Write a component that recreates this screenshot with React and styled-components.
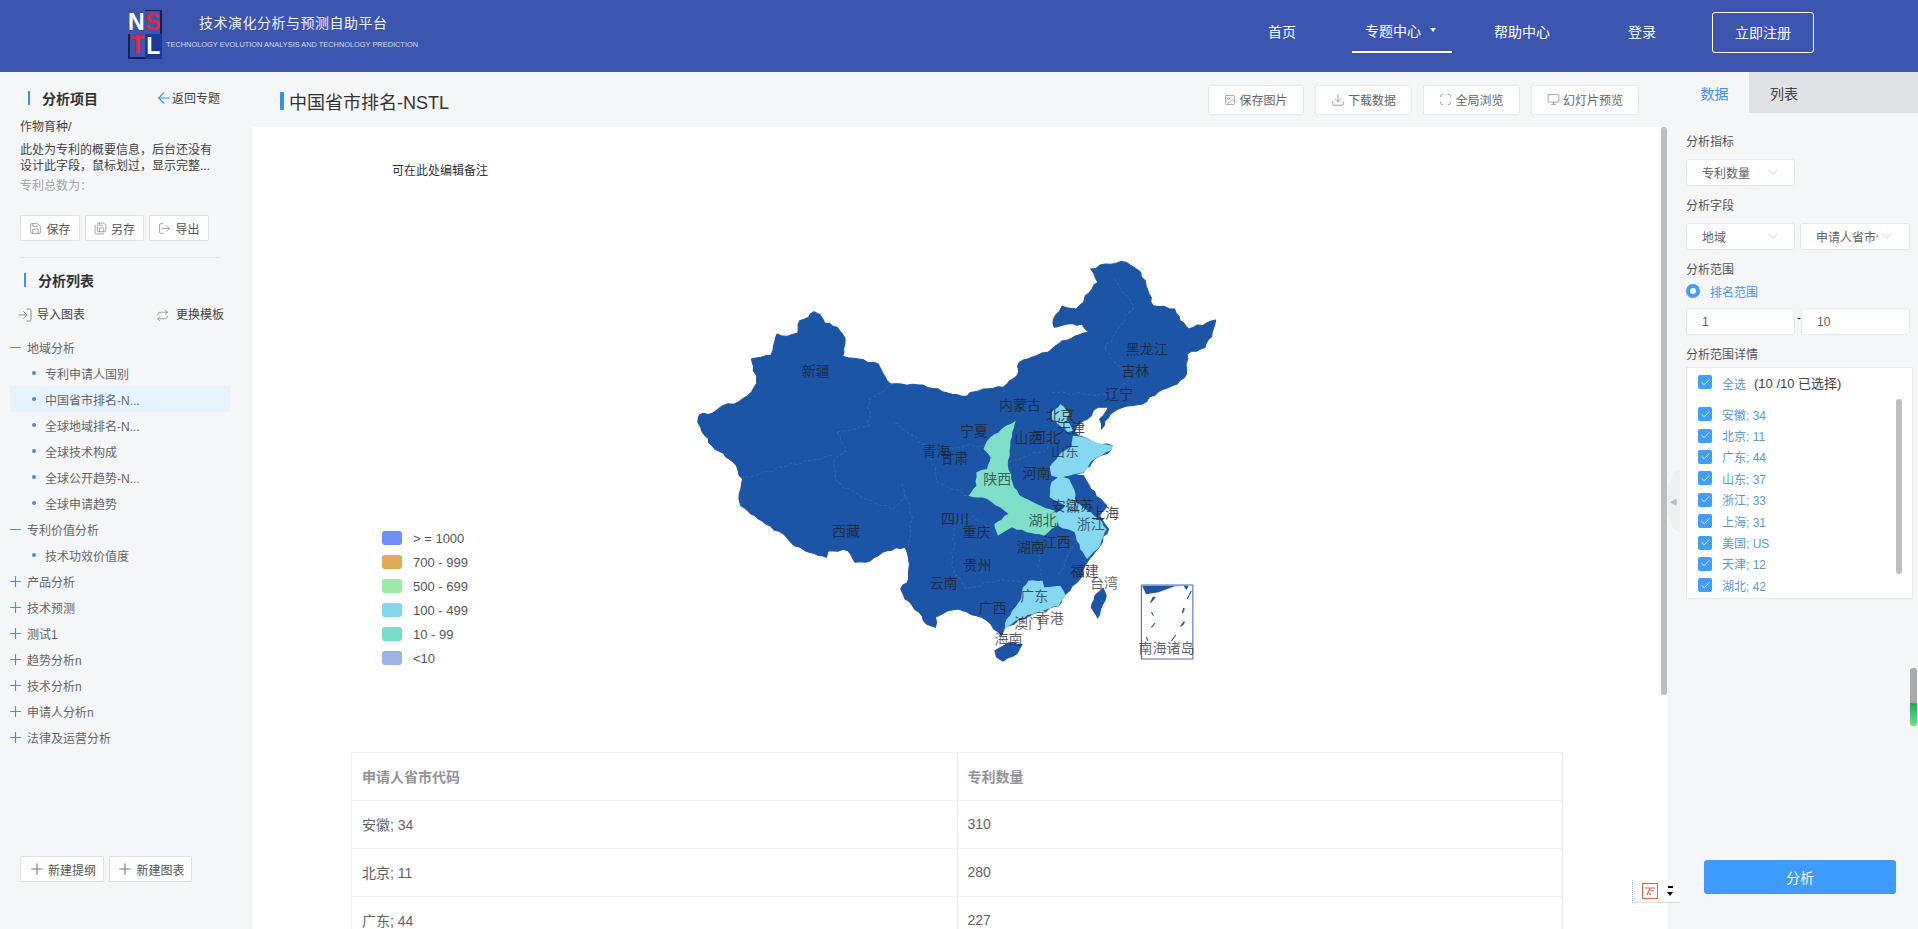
import React from "react";
import styled, { createGlobalStyle } from "styled-components";
import {
  ArrowLeft,
  Check,
  ChevronDown,
  Download,
  Image as ImageIcon,
  LogIn,
  LogOut,
  Minus,
  Monitor,
  Plus,
  Repeat,
  Save,
  SaveAll,
  Scan,
} from "lucide-react";

const GlobalStyle = createGlobalStyle`
  html, body {
    margin: 0;
    padding: 0;
    background: #f5f6f8;
    overflow: hidden;
  }
  * {
    box-sizing: border-box;
  }
  body {
    font-family: "Liberation Sans", "Noto Sans CJK SC", sans-serif;
    font-size: 12px;
    color: #333;
  }
`;

const Page = styled.div`
  position: relative;
  width: 1918px;
  height: 929px;
  display: flex;
  flex-direction: column;
  overflow: hidden;
`;

const Header = styled.header`
  height: 72px;
  flex: none;
  background: #3c56af;
  display: flex;
  align-items: center;
  padding: 0 104px 0 128px;
  color: #fff;
`;

const Logo = styled.div`
  width: 34px;
  height: 44px;
  margin-top: -8px;
  display: grid;
  grid-template-columns: 1fr 1fr;
  grid-template-rows: 1fr 1fr;
  flex: none;
`;

const LogoCell = styled.span`
  display: flex;
  align-items: center;
  justify-content: center;
  font-weight: 700;
  font-size: 23px;
  line-height: 1;
  color: ${(p) => p.$color};
  background: ${(p) => p.$bg || "transparent"};
  border-style: solid;
  border-color: #14214f;
  border-width: ${(p) => p.$edge || "0"};
`;

const Brand = styled.div`
  margin-left: 4px;
  margin-top: -10px;
  display: flex;
  flex-direction: column;
`;

const BrandTitle = styled.div`
  margin-left: 33px;
  font-size: 14px;
  letter-spacing: 0.5px;
  line-height: 20px;
  color: #eef1fa;
`;

const BrandSub = styled.div`
  margin-top: 7px;
  font-size: 7.4px;
  line-height: 10px;
  white-space: nowrap;
  color: #d5dcf2;
`;

const Nav = styled.nav`
  margin-left: auto;
  display: flex;
  align-items: center;
  height: 72px;
`;

const NavItem = styled.a`
  width: ${(p) => p.$w}px;
  height: 41px;
  margin-top: -7px;
  padding: 0 ${(p) => (p.$active ? 3 : 0)}px 3px 0;
  display: flex;
  align-items: center;
  justify-content: center;
  gap: 9px;
  font-size: 14px;
  color: #fff;
  border-bottom: ${(p) => (p.$active ? "2px solid #fff" : "none")};
`;

const Caret = styled.i`
  width: 0;
  height: 0;
  border-left: 3.5px solid transparent;
  border-right: 3.5px solid transparent;
  border-top: 4px solid #fff;
`;

const RegisterButton = styled.button`
  width: 102px;
  height: 41px;
  margin-top: -7px;
  margin-left: 20px;
  padding: 0 0 2px;
  background: transparent;
  border: 1px solid #fff;
  border-radius: 3px;
  color: #fff;
  font: inherit;
  font-size: 14px;
`;

const Body = styled.div`
  flex: 1;
  min-height: 0;
  display: grid;
  grid-template-columns: 253px 1414px 251px;
`;

const LeftPanel = styled.aside`
  display: flex;
  flex-direction: column;
  padding: 18px 0 47px 20px;
  min-height: 0;
`;

const SectionHead = styled.div`
  display: flex;
  align-items: center;
  height: ${(p) => p.$h || 16}px;
  margin-left: ${(p) => p.$indent || 8}px;
  margin-top: ${(p) => p.$top || 0}px;
  font-size: 14px;
  font-weight: 700;
  color: #333;
  &::before {
    content: "";
    width: 2px;
    height: 14px;
    margin-right: 12px;
    background: #3e8fe8;
  }
`;

const BackLink = styled.a`
  margin-left: auto;
  margin-right: 33px;
  display: flex;
  align-items: center;
  font-size: 12px;
  font-weight: 400;
  color: #444;
  svg {
    color: #3e8fe8;
    margin-right: -1px;
  }
`;

const Crumb = styled.div`
  margin-top: 14px;
  line-height: 16px;
  color: #444;
`;

const Summary = styled.div`
  margin-top: 7px;
  width: 196px;
  line-height: 16px;
  color: #444;
`;

const Total = styled.div`
  margin-top: 4px;
  line-height: 16px;
  color: #a3a5a9;
`;

const ButtonRow = styled.div`
  margin-top: ${(p) => p.$top}px;
  display: flex;
  gap: 5px;
`;

const GhostButton = styled.button`
  width: ${(p) => p.$w}px;
  height: 26px;
  padding: 0;
  display: flex;
  align-items: center;
  justify-content: center;
  gap: ${(p) => p.$gap || 4}px;
  background: #fff;
  border: 1px solid #dfe1e6;
  border-radius: 1px;
  font: inherit;
  font-size: 12px;
  color: #555;
  svg {
    color: #777;
  }
`;

const Divider = styled.div`
  width: 200px;
  height: 1px;
  margin-top: 16px;
  background: #e7e8ec;
`;

const ListActions = styled.div`
  display: flex;
  justify-content: space-between;
  width: 207px;
  margin: 19px 0 0 -3px;
`;

const ListAction = styled.a`
  display: flex;
  align-items: center;
  gap: ${(p) => p.$gap}px;
  line-height: 16px;
  color: #444;
  svg {
    color: #777;
  }
`;

const Tree = styled.ul`
  list-style: none;
  margin: 11px 0 0 -10px;
  padding: 0;
  width: 220px;
`;

const TreeRow = styled.li`
  height: 26px;
  display: flex;
  align-items: center;
  padding-left: ${(p) => (p.$child ? 22 : 0)}px;
  color: #666;
  background: ${(p) => (p.$active ? "#e6f2fd" : "transparent")};
  svg {
    color: #4a8ed8;
    margin: 0 3px 0 -3px;
    flex: none;
  }
`;

const Bullet = styled.i`
  width: 4px;
  height: 4px;
  margin-right: 9px;
  border-radius: 50%;
  background: #4a8ed8;
`;

const BottomRow = styled(ButtonRow)`
  margin-top: auto;
`;

const Center = styled.main`
  position: relative;
  display: flex;
  flex-direction: column;
  min-height: 0;
`;

const Toolbar = styled.div`
  height: 55px;
  flex: none;
  display: flex;
  align-items: center;
  padding: 0 28px 0 27px;
`;

const PageTitle = styled.h1`
  margin: 2px 0 0;
  display: flex;
  align-items: center;
  font-size: 18px;
  font-weight: 400;
  color: #333;
  &::before {
    content: "";
    width: 4px;
    height: 18px;
    margin-right: 5px;
    background: #3e8fe8;
  }
`;

const ToolActions = styled.div`
  margin-left: auto;
  display: flex;
  gap: 11px;
`;

const ToolButton = styled.button`
  width: ${(p) => p.$w}px;
  height: 30px;
  padding: 0;
  display: flex;
  align-items: center;
  justify-content: center;
  gap: 3px;
  background: #fff;
  border: 1px solid #e8e9ed;
  border-radius: 2px;
  font: inherit;
  font-size: 12px;
  color: #666;
  svg {
    color: #777;
  }
`;

const Sheet = styled.div`
  flex: 1;
  min-height: 0;
  background: #fff;
  overflow: hidden;
`;

const ThumbMain = styled.div`
  position: absolute;
  right: 0;
  top: 55px;
  width: 6px;
  height: 568px;
  border-radius: 3px;
  background: #bdbdbd;
`;

const Note = styled.div`
  margin: 36px 0 0 139px;
  line-height: 16px;
  color: #333;
`;

const ChartArea = styled.div`
  position: relative;
  padding: 70px 0 73px 427px;
`;

const Legend = styled.ul`
  position: absolute;
  left: 129px;
  top: 347px;
  list-style: none;
  margin: 0;
  padding: 0;
`;

const LegendItem = styled.li`
  height: 24px;
  display: flex;
  align-items: center;
  font-size: 13px;
  color: #555;
  &::before {
    content: "";
    width: 20px;
    height: 14px;
    margin-right: 11px;
    border-radius: 3px;
    background: ${(p) => p.$color};
  }
`;

const MapSvg = styled.svg`
  display: block;
  width: 560px;
  height: 430px;
`;

const MapLabel = styled.text`
  font-size: 14px;
  fill: #1f2530;
  fill-opacity: ${(p) => (p.$soft ? 0.72 : 0.85)};
  text-anchor: middle;
  dominant-baseline: central;
`;

const DataTable = styled.table`
  width: 1212px;
  margin-left: 98px;
  border-collapse: collapse;
  table-layout: fixed;
  font-size: 14px;
  color: #606266;
  th,
  td {
    height: 48px;
    padding: 0 10px 1px;
    text-align: left;
    border: 1px solid #ebeef5;
  }
  th {
    font-weight: 700;
    color: #909399;
  }
`;

const RightPanel = styled.aside`
  position: relative;
  display: flex;
  flex-direction: column;
  min-height: 0;
`;

const Tabs = styled.div`
  height: 41px;
  flex: none;
  display: flex;
  margin-left: 13px;
  background: #e0e1e4;
`;

const Tab = styled.div`
  width: ${(p) => (p.$active ? 69 : 70)}px;
  display: flex;
  align-items: center;
  justify-content: center;
  font-size: 14px;
  color: ${(p) => (p.$active ? "#3e8fe8" : "#444")};
  background: ${(p) => (p.$active ? "#f5f6f8" : "transparent")};
`;

const Form = styled.div`
  padding: 21px 5px 0 19px;
`;

const FieldLabel = styled.div`
  height: 16px;
  line-height: 16px;
  color: #555;
  margin-top: ${(p) => p.$top || 0}px;
`;

const FieldRow = styled.div`
  display: flex;
  align-items: center;
  margin-top: ${(p) => p.$top || 9}px;
  gap: 5px;
`;

const SelectBox = styled.div`
  position: relative;
  width: ${(p) => p.$w || 109}px;
  height: 27px;
  padding-left: 15px;
  display: flex;
  align-items: center;
  overflow: hidden;
  white-space: nowrap;
  background: #fff;
  border: 1px solid #e4e7ed;
  border-radius: 3px;
  color: #606266;
  span {
    display: block;
    width: ${(p) => (p.$clip ? 62 : 70)}px;
    overflow: hidden;
  }
  svg {
    position: absolute;
    right: ${(p) => (p.$clip ? 13 : 12)}px;
    top: 3px;
    color: #c0c4cc;
  }
`;

const RadioRow = styled.div`
  height: 16px;
  margin-top: 5px;
  display: flex;
  align-items: center;
  gap: 10px;
  color: #4a97ef;
`;

const Radio = styled.i`
  width: 14px;
  height: 14px;
  border-radius: 50%;
  border: 4px solid #409eff;
  background: #fff;
`;

const NumberBox = styled.div`
  width: 109px;
  height: 27px;
  padding-left: 15px;
  display: flex;
  align-items: center;
  background: #fff;
  border: 1px solid #e4e7ed;
  border-radius: 3px;
  color: #606266;
`;

const RangeDash = styled.span`
  width: 1px;
  margin: -8px -2px 0 -3px;
  line-height: 10px;
`;

const DetailBox = styled.div`
  position: relative;
  width: 227px;
  height: 232px;
  margin-top: 4px;
  padding: 7px 0 0 11px;
  background: #fff;
  border: 1px solid #e4e7ed;
  overflow: hidden;
`;

const CheckRow = styled.div`
  height: ${(p) => (p.$head ? 28.5 : 21.4)}px;
  display: flex;
  align-items: ${(p) => (p.$head ? "flex-start" : "center")};
  gap: 10px;
  color: #5c97dc;
`;

const Tick = styled.span`
  width: 14px;
  height: 14px;
  flex: none;
  display: flex;
  align-items: center;
  justify-content: center;
  border-radius: 2px;
  background: #409eff;
  color: #fff;
`;

const Counter = styled.span`
  font-size: 13px;
  color: #444;
  margin: -2px 0 0 -2px;
`;

const ThumbList = styled.div`
  position: absolute;
  right: 10px;
  top: 31px;
  width: 6px;
  height: 175px;
  border-radius: 3px;
  background: #bdbdbd;
`;

const CollapseHandle = styled.div`
  position: absolute;
  left: 0;
  top: 398px;
  width: 13px;
  height: 62px;
  display: flex;
  align-items: center;
  justify-content: center;
  background: #eeeff2;
  clip-path: ellipse(100% 50% at 100% 50%);
  font-size: 8px;
  color: #bbb;
`;

const AnalyzeButton = styled.button`
  position: absolute;
  left: 37px;
  bottom: 35px;
  width: 192px;
  height: 34px;
  background: #3e9bff;
  border: none;
  border-radius: 3px;
  color: #fff;
  font: inherit;
  font-size: 14px;
`;

const SideGauge = styled.div`
  position: absolute;
  right: 1px;
  top: 596px;
  width: 7px;
  height: 58px;
  border-radius: 3px;
  overflow: hidden;
  background: linear-gradient(#a9a9a9 0, #a9a9a9 60%, #1fa65a 60%, #6fe08c 100%);
`;

const FloatWidget = styled.div`
  position: absolute;
  left: 1632px;
  top: 880px;
  width: 48px;
  height: 23px;
  display: flex;
  align-items: center;
  padding-left: 2px;
  background: #fff;
  border-bottom: 1px solid #dedede;
  border-left: 1px dotted #9dbad0;
`;

const ImeBadge = styled.div`
  width: 16px;
  height: 16px;
  margin-left: 7px;
  border: 1px solid #d9694a;
  display: flex;
  align-items: center;
  justify-content: center;
`;

const ImeArrows = styled.div`
  margin-left: 9px;
  display: flex;
  flex-direction: column;
  align-items: center;
  gap: 4px;
  &::before {
    content: "";
    width: 5px;
    height: 2px;
    background: #000;
  }
  &::after {
    content: "";
    border-left: 3px solid transparent;
    border-right: 3px solid transparent;
    border-top: 4px solid #000;
  }
`;

const TREE = [
  { label: "地域分析", open: true },
  { label: "专利申请人国别", child: true },
  { label: "中国省市排名-N...", child: true, active: true },
  { label: "全球地域排名-N...", child: true },
  { label: "全球技术构成", child: true },
  { label: "全球公开趋势-N...", child: true },
  { label: "全球申请趋势", child: true },
  { label: "专利价值分析", open: true },
  { label: "技术功效价值度", child: true },
  { label: "产品分析" },
  { label: "技术预测" },
  { label: "测试1" },
  { label: "趋势分析n" },
  { label: "技术分析n" },
  { label: "申请人分析n" },
  { label: "法律及运营分析" },
];

const LEGEND = [
  ["> = 1000", "#6f8efc"],
  ["700 - 999", "#e0a957"],
  ["500 - 699", "#9ceaa6"],
  ["100 - 499", "#80d6ee"],
  ["10 - 99", "#74e0ca"],
  ["<10", "#9fb2e8"],
];

const REGIONS = ["安徽; 34", "北京; 11", "广东; 44", "山东; 37", "浙江; 33", "上海; 31", "美国; US", "天津; 12", "湖北; 42"];

// map shapes are traced at 2.8x / 3x of the 560x430 canvas
const CHINA =
  "M50 520 55 497 90 493 120 470 165 458 190 440 215 403 215 380 205 365 200 330 240 320 255 318 262 290 272 255 300 262 330 252 335 215 360 205 375 188 392 197 405 222 440 235 462 268 458 300 455 322 500 330 555 345 575 385 590 405 620 405 680 408 735 428 790 442 850 420 905 415 945 378 950 340 985 325 1030 310 1060 285 1105 262 1145 250 1125 225 1085 225 1048 235 1045 212 1070 172 1110 180 1130 160 1135 140 1170 100 1150 60 1190 45 1250 40 1290 70 1305 110 1325 170 1385 180 1400 215 1425 240 1500 213 1490 250 1470 295 1420 315 1418 375 1392 405 1340 428 1295 465 1240 475 1205 495 1180 540 1175 510 1200 475 1170 475 1140 510 1110 530 1105 550 1130 565 1165 585 1210 590 1205 605 1160 630 1130 670 1090 675 1130 680 1150 720 1195 770 1175 800 1200 840 1170 900 1140 940 1120 990 1080 1035 1060 1070 1000 1090 960 1110 910 1135 900 1160 860 1115 830 1100 780 1080 750 1085 715 1105 715 1135 690 1125 670 1090 630 1050 618 1020 640 990 640 930 630 895 580 905 520 940 490 940 470 905 415 905 410 925 350 905 320 890 290 855 240 825 210 800 170 770 165 750 175 690 150 640 90 590 70 560Z";
const HAINAN = "M880 1205 920 1180 960 1185 945 1215 905 1238 885 1225Z";
const TAIWAN = "M1185 1015 1195 1040 1170 1110 1150 1075 1160 1040Z";
const MINT =
  "M940 515 900 540 860 575 850 600 870 625 860 660 830 670 830 710 808 740 860 750 920 795 880 825 890 860 930 835 970 850 1020 860 1055 830 1060 800 1050 785 1010 770 960 745 935 715 918 650 925 590 930 550Z";
const SKY = [
  "M1040 700 1060 685 1090 690 1105 725 1110 760 1150 790 1175 810 1195 840 1170 900 1140 930 1120 900 1105 850 1060 830 1055 790 1080 770 1035 745Z",
  "M1035 655 1060 620 1095 590 1100 560 1130 565 1165 580 1212 590 1205 605 1160 630 1130 670 1090 680 1065 690 1040 680Z",
  "M1065 465 1090 490 1085 510 1100 545 1085 550 1040 510 1040 490Z",
  "M975 995 1015 995 1020 1015 1065 1010 1080 1040 1060 1070 1000 1090 950 1110 915 1135 903 1160 915 1110 930 1085 955 1050 960 1015Z",
];
const BORDERS = [
  "M440 550 530 530 530 450 600 405",
  "M440 550 465 600 430 640 440 700 520 750 590 780 640 740",
  "M170 690 300 650 430 620",
  "M640 895 650 800 620 700",
  "M600 520 700 600 720 700 810 740",
  "M760 600 800 590 850 590",
  "M1190 300 1225 350 1260 390 1210 440 1040 430",
  "M1215 90 1270 170 1190 300",
  "M920 640 1030 600 1060 520",
  "M880 850 820 800 770 830 760 950 800 1020 900 990 960 1000",
  "M1000 860 1010 980",
  "M1100 890 1060 980",
];
const INSET_DASHES = [
  "M1325 1045 1318 1060 1330 1045Z",
  "M1410 1078 1407 1092 1412 1080Z",
  "M1412 1118 1402 1132 1410 1125Z",
  "M1330 1122 1320 1135",
  "M1320 1090 1326 1100",
  "M1388 1158 1376 1176",
  "M1306 1164 1310 1176",
  "M1432 1025 1420 1050",
];
const LABELS = [
  ["新疆", 380, 367], ["西藏", 465, 845], ["青海", 718, 607], ["甘肃", 768, 627], ["宁夏", 823, 547],
  ["内蒙古", 952, 468], ["黑龙江", 1307, 300], ["吉林", 1275, 365], ["辽宁", 1230, 435], ["北京", 1065, 497],
  ["天津", 1095, 537], ["山西", 975, 567], ["河北", 1025, 563], ["山东", 1078, 607, 1], ["陕西", 888, 690, 1],
  ["河南", 998, 672], ["江苏", 1120, 767], ["安徽", 1080, 772, 1], ["上海", 1190, 793], ["四川", 770, 810],
  ["重庆", 830, 850], ["湖北", 1015, 813, 1], ["浙江", 1150, 825, 1], ["湖南", 982, 893], ["江西", 1055, 880],
  ["贵州", 833, 948], ["云南", 738, 1002], ["福建", 1133, 967], ["台湾", 1187, 1003, 1], ["广东", 992, 1042, 1],
  ["广西", 875, 1077], ["香港", 1035, 1107, 1], ["澳门", 975, 1122, 1], ["海南", 920, 1170, 1], ["南海诸岛", 1362, 1198, 1],
];

// breaks the straight traced edges into a small, repeatable wobble
const rough = (d, amp = 4) => {
  const nums = d.match(/[\d.]+/g).map(Number);
  const closed = d.endsWith("Z");
  const pts = [];
  for (let i = 0; i < nums.length; i += 2) pts.push([nums[i], nums[i + 1]]);
  if (closed) pts.push(pts[0]);
  const out = [pts[0]];
  for (let i = 1; i < pts.length; i++) {
    const [ax, ay] = pts[i - 1];
    const [bx, by] = pts[i];
    const len = Math.hypot(bx - ax, by - ay);
    const n = Math.max(1, Math.round(len / 14));
    for (let k = 1; k <= n; k++) {
      const t = k / n;
      const wobble = k === n ? 0 : amp * Math.sin(k * 2.7 + i * 1.3) * Math.cos(k * 1.1 + i);
      out.push([ax + (bx - ax) * t + (wobble * (by - ay)) / len, ay + (by - ay) * t - (wobble * (bx - ax)) / len]);
    }
  }
  return "M" + out.map(([x, y]) => `${x.toFixed(1)} ${y.toFixed(1)}`).join(" ") + (closed ? "Z" : "");
};

function ChinaMap() {
  return (
    <MapSvg viewBox="0 0 560 430">
      <g transform="scale(0.35714 0.33333)" strokeLinejoin="round">
        <path d={rough(CHINA)} fill="#1c54a6" stroke="#1c54a6" strokeWidth="3" />
        <path d={rough(HAINAN, 2)} fill="#1c54a6" />
        <path d={rough(TAIWAN, 2)} fill="#1c54a6" />
        <path d={rough(MINT, 3)} fill="#7ee0c8" />
        {SKY.map((d) => (
          <path key={d} d={rough(d, 3)} fill="#86d7f0" />
        ))}
        {BORDERS.map((d) => (
          <path key={d} d={rough(d, 6)} fill="none" stroke="#6d9bd3" strokeOpacity="0.55" strokeWidth="1.5" strokeDasharray="10 5" />
        ))}
        <path d="M1292 1008H1436V1230H1292Z" fill="#fff" stroke="#4e6fae" strokeWidth="3" />
        <path d="M1294 1010 1420 1010 1385 1012 1340 1030 1305 1036Z" fill="#1c54a6" />
        <path d="M1410 1010 1424 1010 1418 1024Z" fill="#1c54a6" />
        {INSET_DASHES.map((d) => (
          <path key={d} d={d} fill="#1c54a6" stroke="#1c54a6" strokeWidth="3" />
        ))}
      </g>
      {LABELS.map(([name, x, y, soft]) => (
        <MapLabel key={name} x={x / 2.8} y={y / 3} $soft={soft}>
          {name}
        </MapLabel>
      ))}
    </MapSvg>
  );
}

export default function App() {
  return (
    <Page>
      <GlobalStyle />
      <Header>
        <Logo>
          <LogoCell $color="#fff">N</LogoCell>
          <LogoCell $color="#e3263c" $edge="1px 2px 0 0">S</LogoCell>
          <LogoCell $color="#e3263c" $edge="0 0 2px 2px">T</LogoCell>
          <LogoCell $color="#fff" $bg="#173a9c">L</LogoCell>
        </Logo>
        <Brand>
          <BrandTitle>技术演化分析与预测自助平台</BrandTitle>
          <BrandSub>TECHNOLOGY EVOLUTION ANALYSIS AND TECHNOLOGY PREDICTION</BrandSub>
        </Brand>
        <Nav>
          <NavItem $w={140}>首页</NavItem>
          <NavItem $w={100} $active>
            专题中心 <Caret />
          </NavItem>
          <NavItem $w={140}>帮助中心</NavItem>
          <NavItem $w={100}>登录</NavItem>
          <RegisterButton>立即注册</RegisterButton>
        </Nav>
      </Header>
      <Body>
        <LeftPanel>
          <SectionHead $h={15}>
            分析项目
            <BackLink>
              <ArrowLeft size={18} strokeWidth={1.5} />
              返回专题
            </BackLink>
          </SectionHead>
          <Crumb>作物育种/</Crumb>
          <Summary>
            此处为专利的概要信息，后台还没有
            <br />
            设计此字段，鼠标划过，显示完整...
          </Summary>
          <Total>专利总数为：</Total>
          <ButtonRow $top={21}>
            <GhostButton $w={60}><Save size={13} strokeWidth={1.2} />保存</GhostButton>
            <GhostButton $w={59}><SaveAll size={13} strokeWidth={1.2} />另存</GhostButton>
            <GhostButton $w={60}><LogOut size={13} strokeWidth={1.2} />导出</GhostButton>
          </ButtonRow>
          <Divider />
          <SectionHead $indent={4} $top={14}>
            分析列表
          </SectionHead>
          <ListActions>
            <ListAction $gap={4}><LogIn size={16} strokeWidth={1.2} />导入图表</ListAction>
            <ListAction $gap={7}><Repeat size={13} strokeWidth={1.2} />更换模板</ListAction>
          </ListActions>
          <Tree>
            {TREE.map((row) => (
              <TreeRow key={row.label} $child={row.child} $active={row.active}>
                {row.child ? (
                  <Bullet />
                ) : row.open ? (
                  <Minus size={17} strokeWidth={1.6} />
                ) : (
                  <Plus size={17} strokeWidth={1.6} />
                )}
                {row.label}
              </TreeRow>
            ))}
          </Tree>
          <BottomRow>
            <GhostButton $w={84} $gap={2}><Plus size={18} strokeWidth={1.5} />新建提纲</GhostButton>
            <GhostButton $w={83} $gap={2}><Plus size={18} strokeWidth={1.5} />新建图表</GhostButton>
          </BottomRow>
        </LeftPanel>

        <Center>
          <Toolbar>
            <PageTitle>中国省市排名-NSTL</PageTitle>
            <ToolActions>
              <ToolButton $w={96}><ImageIcon size={12} strokeWidth={1.2} />保存图片</ToolButton>
              <ToolButton $w={97}><Download size={14} strokeWidth={1.2} />下载数据</ToolButton>
              <ToolButton $w={97}><Scan size={13} strokeWidth={1.2} />全局浏览</ToolButton>
              <ToolButton $w={108}><Monitor size={13} strokeWidth={1.2} />幻灯片预览</ToolButton>
            </ToolActions>
          </Toolbar>
          <Sheet>
            <Note>可在此处编辑备注</Note>
            <ChartArea>
              <Legend>
                {LEGEND.map(([label, color]) => (
                  <LegendItem key={label} $color={color}>{label}</LegendItem>
                ))}
              </Legend>
              <ChinaMap />
            </ChartArea>
            <DataTable>
              <thead>
                <tr><th>申请人省市代码</th><th>专利数量</th></tr>
              </thead>
              <tbody>
                <tr><td>安徽; 34</td><td>310</td></tr>
                <tr><td>北京; 11</td><td>280</td></tr>
                <tr><td>广东; 44</td><td>227</td></tr>
              </tbody>
            </DataTable>
          </Sheet>
          <ThumbMain />
        </Center>

        <RightPanel>
          <Tabs>
            <Tab $active>数据</Tab>
            <Tab>列表</Tab>
          </Tabs>
          <CollapseHandle>◀</CollapseHandle>
          <Form>
            <FieldLabel>分析指标</FieldLabel>
            <FieldRow>
              <SelectBox><span>专利数量</span><ChevronDown size={18} strokeWidth={1} /></SelectBox>
            </FieldRow>
            <FieldLabel $top={12}>分析字段</FieldLabel>
            <FieldRow>
              <SelectBox><span>地域</span><ChevronDown size={18} strokeWidth={1} /></SelectBox>
              <SelectBox $w={110} $clip><span>申请人省市代码</span><ChevronDown size={18} strokeWidth={1} /></SelectBox>
            </FieldRow>
            <FieldLabel $top={12}>分析范围</FieldLabel>
            <RadioRow><Radio />排名范围</RadioRow>
            <FieldRow $top={9}>
              <NumberBox>1</NumberBox>
              <RangeDash>-</RangeDash>
              <NumberBox>10</NumberBox>
            </FieldRow>
            <FieldLabel $top={12}>分析范围详情</FieldLabel>
            <DetailBox>
              <CheckRow $head>
                <Tick><Check size={11} strokeWidth={2} /></Tick>
                全选 <Counter>(10 /10 已选择)</Counter>
              </CheckRow>
              {REGIONS.map((r) => (
                <CheckRow key={r}>
                  <Tick><Check size={11} strokeWidth={2} /></Tick>
                  {r}
                </CheckRow>
              ))}
              <ThumbList />
            </DetailBox>
          </Form>
          <AnalyzeButton>分析</AnalyzeButton>
          <SideGauge />
        </RightPanel>
      </Body>
      <FloatWidget>
        <ImeBadge>
          <svg width="12" height="12" viewBox="0 0 12 12" fill="none" stroke="#d9694a" strokeWidth="1.2">
            <path d="M1 3h10M6 3 3 10M6 5l4 1M5 8l2 2" />
          </svg>
        </ImeBadge>
        <ImeArrows />
      </FloatWidget>
    </Page>
  );
}
